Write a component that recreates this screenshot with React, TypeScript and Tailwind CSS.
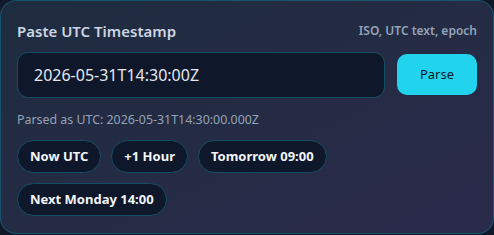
import React, { useState } from 'react';

const PRESETS = ['Now UTC', '+1 Hour', 'Tomorrow 09:00', 'Next Monday 14:00'];

export default function App() {
  const [value, setValue] = useState('2026-05-31T14:30:00Z');

  return (
    <div
      className="h-[235px] w-[494px] bg-[#111827]"
      style={{ fontFamily: '"Noto Sans", "Open Sans", sans-serif' }}
    >
      <div className="h-[234px] rounded-2xl border border-[#155e75]/80 bg-linear-to-br from-[#1e2c3f] to-[#2a2a4a] px-4 pt-[19px]">
        <div className="flex items-center justify-between">
          <h3 className="text-[15px] font-semibold text-[#cbd5e1]">Paste UTC Timestamp</h3>
          <span className="text-[12px] font-semibold text-[#94a3b8]">ISO, UTC text, epoch</span>
        </div>

        <div className="mt-[9px] flex items-center gap-3">
          <input
            value={value}
            onChange={(e) => setValue(e.target.value)}
            className="h-[46px] w-[368px] rounded-[11px] border border-[#164e63] bg-[#0f172a] px-4 text-[16px] text-[#e2e8f0] outline-none"
          />
          <button className="h-[41px] w-[80px] rounded-[10px] bg-[#22d3ee] text-[13px] text-[#0f172a]">
            Parse
          </button>
        </div>

        <p className="mt-[13px] text-[12.4px] text-[#94a3b8]">Parsed as UTC: 2026-05-31T14:30:00.000Z</p>

        <div className="mt-[11px] flex flex-wrap gap-[10px]">
          {PRESETS.map((p) => (
            <button
              key={p}
              className="h-[33px] rounded-full border border-[#164e63] bg-[#0f172a] px-3 text-[13px] font-bold text-[#f1f5f9]"
            >
              {p}
            </button>
          ))}
        </div>
      </div>
    </div>
  );
}
